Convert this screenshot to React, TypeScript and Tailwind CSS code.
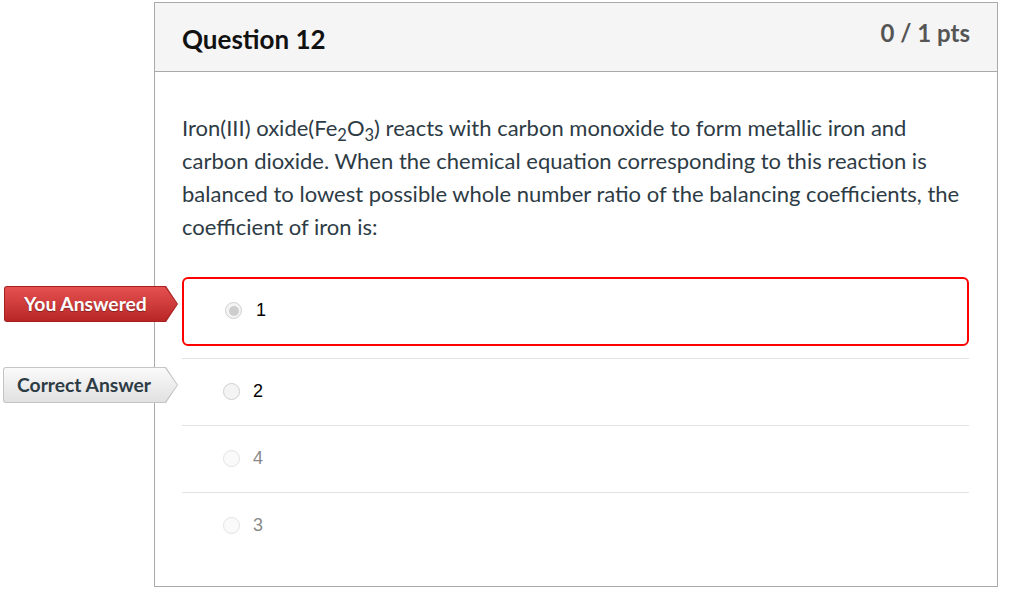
import React from "react";

type Answer = {
  label: string;
  state: "chosen" | "correct" | "disabled";
};

const answers: Answer[] = [
  { label: "1", state: "chosen" },
  { label: "2", state: "correct" },
  { label: "4", state: "disabled" },
  { label: "3", state: "disabled" },
];

const arrowClip = "[clip-path:polygon(0_0,calc(100%-12px)_0,100%_50%,calc(100%-12px)_100%,0_100%)]";

function Badge({ kind }: { kind: "wrong" | "right" }) {
  if (kind === "wrong") {
    return (
      <div className="absolute top-[9px] -left-[178px] w-[174px] h-[36px]">
        <div className={`absolute inset-0 rounded-l-[3px] bg-[#a92020] ${arrowClip}`}>
          <div className={`absolute inset-[1px] rounded-l-[2px] bg-gradient-to-b from-[#e55050] to-[#b82626] ${arrowClip}`} />
        </div>
        <span className="relative flex h-full items-center pl-[20px] text-[19.3px] font-bold text-white [text-shadow:0_1px_1px_rgba(0,0,0,0.35)]">
          You Answered
        </span>
      </div>
    );
  }
  return (
    <div className="absolute top-[8px] -left-[179px] w-[175px] h-[36px]">
      <div className={`absolute inset-0 rounded-l-[3px] bg-[#c4c4c4] ${arrowClip}`}>
        <div className={`absolute inset-[1px] rounded-l-[2px] bg-gradient-to-b from-[#fafafa] to-[#e1e1e1] ${arrowClip}`} />
      </div>
      <span className="relative flex h-full items-center pl-[14px] text-[19.3px] font-bold text-[#2d3b45]">
        Correct Answer
      </span>
    </div>
  );
}

function Radio({ checked, faded }: { checked?: boolean; faded?: boolean }) {
  return (
    <span
      className={`flex h-[17px] w-[17px] items-center justify-center rounded-full border ${
        faded ? "border-[#e3e3e3] bg-[#fafafa]" : "border-[#cfcfcf] bg-[#f4f4f4]"
      }`}
    >
      {checked && <span className="h-[10px] w-[10px] rounded-full bg-[#cdcdcd]" />}
    </span>
  );
}

export default function App() {
  return (
    <div className="min-h-screen bg-white pt-[2px] font-['Lato','Liberation_Sans',sans-serif] text-[#2d3b45]">
      <div className="ml-[154px] w-[844px] border border-[#aaaaaa]">
        {/* header */}
        <div className="flex h-[69px] items-start justify-between border-b border-[#aaaaaa] bg-[#f5f5f5] pl-[27px] pr-[27px]">
          <h2 className="pt-[20px] text-[26px] font-bold leading-[32px] text-[#111]">Question 12</h2>
          <div className="pt-[14px] text-[24px] font-bold leading-[32px] text-[#555]">0 / 1 pts</div>
        </div>

        {/* body */}
        <div className="pl-[27px] pr-[28px] pt-[39px] pb-[27px]">
          <p className="text-[22px] leading-[33px]">
            Iron(III) oxide(Fe<span className="relative top-[0.3em] text-[0.75em] leading-none">2</span>O
            <span className="relative top-[0.3em] text-[0.75em] leading-none">3</span>) reacts with carbon monoxide to form
            metallic iron and carbon dioxide. When the chemical equation corresponding to this reaction is balanced to
            lowest possible whole number ratio of the balancing coefficients, the coefficient of iron is:
          </p>

          <div className="mt-[34px]">
            {answers.map((a, i) => {
              const faded = a.state === "disabled";
              if (a.state === "chosen") {
                return (
                  <div key={i} className="relative mb-[12px]">
                    <Badge kind="wrong" />
                    <div className="flex h-[69px] items-center gap-[14px] rounded-[6px] border-2 border-[#f00] pl-[41px] pb-[2px]">
                      <Radio checked />
                      <span className="font-['Liberation_Sans',sans-serif] text-[18px] text-black">{a.label}</span>
                    </div>
                  </div>
                );
              }
              return (
                <div key={i} className="relative border-t border-[#e2e2e2]">
                  {a.state === "correct" && <Badge kind="right" />}
                  <div className="flex h-[66px] items-center gap-[13px] pl-[41px] pb-[2px]">
                    <Radio faded={faded} />
                    <span
                      className={`font-['Liberation_Sans',sans-serif] text-[18px] ${
                        faded ? "text-[#8a8a8a]" : "text-black"
                      }`}
                    >
                      {a.label}
                    </span>
                  </div>
                </div>
              );
            })}
          </div>
        </div>
      </div>
    </div>
  );
}
